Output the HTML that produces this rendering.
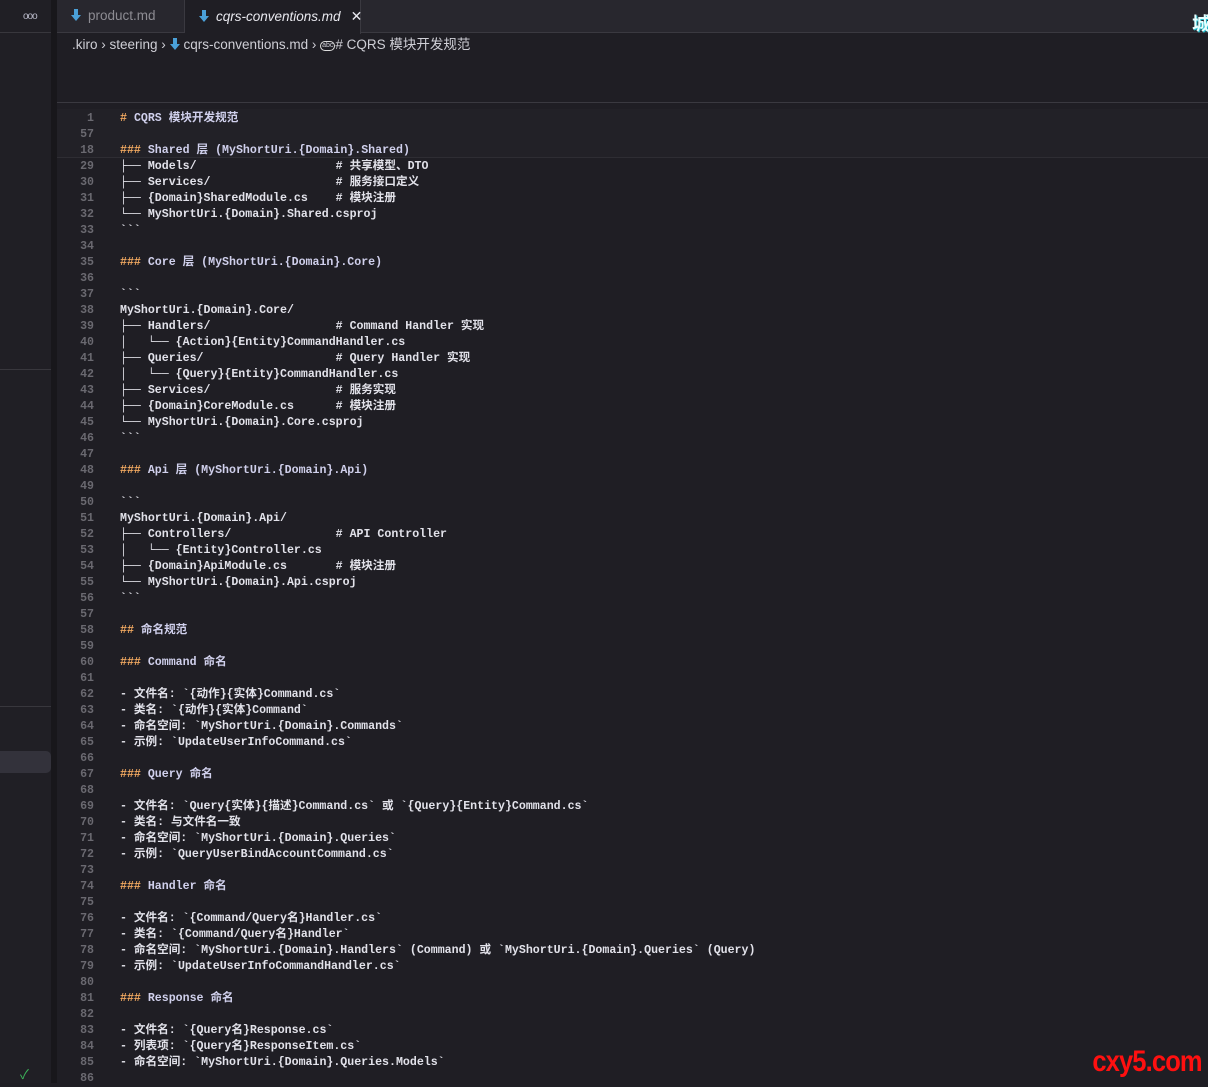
<!DOCTYPE html>
<html><head><meta charset="utf-8">
<style>
*{margin:0;padding:0;box-sizing:border-box}
body{width:1208px;height:1083px;background:#1f1e24;position:relative;overflow:hidden;font-family:"Liberation Sans","Noto Sans CJK SC",sans-serif;color:#d4d4d4}
.side{position:absolute;left:0;top:0;width:51px;height:1083px;background:#201f25}
.gap{position:absolute;left:51px;top:0;width:6px;height:1083px;background:#18171b}
.tabbar{position:absolute;left:57px;top:0;right:0;height:33px;background:#28272e;border-bottom:1px solid #3a3940}
.tab{position:absolute;top:0;height:33px;font-size:13.5px;line-height:32px;border-right:1px solid #3a3940;white-space:nowrap}
.t1{left:0;width:128px;color:#8d8c93;padding-left:14px}
.t2{left:128px;width:176px;background:#1f1e24;color:#e8e8ee;font-style:italic;padding-left:14px;height:34px}
.arrow{display:inline-block;width:10px;height:12px;margin-right:7px;vertical-align:-1px}
.crumb{position:absolute;left:72px;top:33px;font-size:13.5px;color:#cfcfd6;white-space:pre}
.sep{position:absolute;left:57px;right:0;top:102px;height:1px;background:#3a3940}
.sticky{position:absolute;left:57px;right:0;top:109px;height:49px;background:#222127;border-bottom:1px solid #2e2d33}
.code{position:absolute;left:57px;top:111px;font-family:"Liberation Mono","Noto Sans CJK SC",monospace;font-size:11.6px;font-weight:bold}
.l{height:16px;line-height:16px;white-space:pre;position:relative}
.n{position:absolute;left:0;width:37px;text-align:right;color:#6a6970}
.c{position:absolute;left:63px;color:#e2e2ea}
.h{color:#f0a860}
.hd{color:#d0d0ec}
.wm{position:absolute;right:6px;bottom:4px;color:#ff1010;font-family:"Liberation Sans",sans-serif;font-weight:bold;font-size:30px;letter-spacing:-1px;transform:scaleX(0.85);transform-origin:right}
</style></head><body>
<div class="side"></div>
<div style="position:absolute;left:0;top:32px;width:51px;height:1px;background:#38373d"></div>
<div style="position:absolute;left:0;top:369px;width:51px;height:1px;background:#38373d"></div>
<div style="position:absolute;left:0;top:706px;width:51px;height:1px;background:#38373d"></div>
<div style="position:absolute;left:0;top:751px;width:51px;height:22px;background:#33323b;border-radius:0 5px 5px 0"></div>
<div style="position:absolute;left:23px;top:11px;font-size:10px;color:#b8b8c8;letter-spacing:-1px">ooo</div>
<div style="position:absolute;left:20px;top:1064px;color:#3cb55a;font-size:13px">✓</div>
<div class="gap"></div>
<div class="tabbar">
 <div class="tab t1"><svg class="arrow" viewBox="0 0 10 12"><path d="M3 0h4v6h3L5 12 0 6h3z" fill="#4aa0d8"/></svg>product.md</div>
 <div class="tab t2"><svg class="arrow" viewBox="0 0 10 12"><path d="M3 0h4v6h3L5 12 0 6h3z" fill="#4aa0d8"/></svg>cqrs-conventions.md<span style="font-style:normal;margin-left:10px;font-size:14px">✕</span></div>
</div>
<div style="position:absolute;left:1192px;top:10px;color:#e8ffff;font-weight:bold;font-size:18px;font-family:'Noto Sans CJK SC',sans-serif;text-shadow:1px 1px 0 #20c0d0">城</div>
<div class="crumb">.kiro › steering › <svg class="arrow" viewBox="0 0 10 12" style="margin-right:4px"><path d="M3 0h4v6h3L5 12 0 6h3z" fill="#4aa0d8"/></svg>cqrs-conventions.md › <span style="display:inline-block;border:1.5px solid #ddd;border-radius:5px;font-size:7px;line-height:8px;padding:0 1px;vertical-align:2px">abc</span># CQRS 模块开发规范</div>
<div class="sep"></div>
<div class="sticky"></div>
<div class="code">
<div class="l"><span class="n">1</span><span class="c"><span class="h">#</span> <span class="hd">CQRS 模块开发规范</span></span></div>
<div class="l"><span class="n">57</span><span class="c"></span></div>
<div class="l"><span class="n">18</span><span class="c"><span class="h">###</span> <span class="hd">Shared 层 (MyShortUri.{Domain}.Shared)</span></span></div>
<div class="l"><span class="n">29</span><span class="c">├── Models/                    # 共享模型、DTO</span></div>
<div class="l"><span class="n">30</span><span class="c">├── Services/                  # 服务接口定义</span></div>
<div class="l"><span class="n">31</span><span class="c">├── {Domain}SharedModule.cs    # 模块注册</span></div>
<div class="l"><span class="n">32</span><span class="c">└── MyShortUri.{Domain}.Shared.csproj</span></div>
<div class="l"><span class="n">33</span><span class="c">&#96;&#96;&#96;</span></div>
<div class="l"><span class="n">34</span><span class="c"></span></div>
<div class="l"><span class="n">35</span><span class="c"><span class="h">###</span> <span class="hd">Core 层 (MyShortUri.{Domain}.Core)</span></span></div>
<div class="l"><span class="n">36</span><span class="c"></span></div>
<div class="l"><span class="n">37</span><span class="c">&#96;&#96;&#96;</span></div>
<div class="l"><span class="n">38</span><span class="c">MyShortUri.{Domain}.Core/</span></div>
<div class="l"><span class="n">39</span><span class="c">├── Handlers/                  # Command Handler 实现</span></div>
<div class="l"><span class="n">40</span><span class="c">│   └── {Action}{Entity}CommandHandler.cs</span></div>
<div class="l"><span class="n">41</span><span class="c">├── Queries/                   # Query Handler 实现</span></div>
<div class="l"><span class="n">42</span><span class="c">│   └── {Query}{Entity}CommandHandler.cs</span></div>
<div class="l"><span class="n">43</span><span class="c">├── Services/                  # 服务实现</span></div>
<div class="l"><span class="n">44</span><span class="c">├── {Domain}CoreModule.cs      # 模块注册</span></div>
<div class="l"><span class="n">45</span><span class="c">└── MyShortUri.{Domain}.Core.csproj</span></div>
<div class="l"><span class="n">46</span><span class="c">&#96;&#96;&#96;</span></div>
<div class="l"><span class="n">47</span><span class="c"></span></div>
<div class="l"><span class="n">48</span><span class="c"><span class="h">###</span> <span class="hd">Api 层 (MyShortUri.{Domain}.Api)</span></span></div>
<div class="l"><span class="n">49</span><span class="c"></span></div>
<div class="l"><span class="n">50</span><span class="c">&#96;&#96;&#96;</span></div>
<div class="l"><span class="n">51</span><span class="c">MyShortUri.{Domain}.Api/</span></div>
<div class="l"><span class="n">52</span><span class="c">├── Controllers/               # API Controller</span></div>
<div class="l"><span class="n">53</span><span class="c">│   └── {Entity}Controller.cs</span></div>
<div class="l"><span class="n">54</span><span class="c">├── {Domain}ApiModule.cs       # 模块注册</span></div>
<div class="l"><span class="n">55</span><span class="c">└── MyShortUri.{Domain}.Api.csproj</span></div>
<div class="l"><span class="n">56</span><span class="c">&#96;&#96;&#96;</span></div>
<div class="l"><span class="n">57</span><span class="c"></span></div>
<div class="l"><span class="n">58</span><span class="c"><span class="h">##</span> <span class="hd">命名规范</span></span></div>
<div class="l"><span class="n">59</span><span class="c"></span></div>
<div class="l"><span class="n">60</span><span class="c"><span class="h">###</span> <span class="hd">Command 命名</span></span></div>
<div class="l"><span class="n">61</span><span class="c"></span></div>
<div class="l"><span class="n">62</span><span class="c">- 文件名: &#96;{动作}{实体}Command.cs&#96;</span></div>
<div class="l"><span class="n">63</span><span class="c">- 类名: &#96;{动作}{实体}Command&#96;</span></div>
<div class="l"><span class="n">64</span><span class="c">- 命名空间: &#96;MyShortUri.{Domain}.Commands&#96;</span></div>
<div class="l"><span class="n">65</span><span class="c">- 示例: &#96;UpdateUserInfoCommand.cs&#96;</span></div>
<div class="l"><span class="n">66</span><span class="c"></span></div>
<div class="l"><span class="n">67</span><span class="c"><span class="h">###</span> <span class="hd">Query 命名</span></span></div>
<div class="l"><span class="n">68</span><span class="c"></span></div>
<div class="l"><span class="n">69</span><span class="c">- 文件名: &#96;Query{实体}{描述}Command.cs&#96; 或 &#96;{Query}{Entity}Command.cs&#96;</span></div>
<div class="l"><span class="n">70</span><span class="c">- 类名: 与文件名一致</span></div>
<div class="l"><span class="n">71</span><span class="c">- 命名空间: &#96;MyShortUri.{Domain}.Queries&#96;</span></div>
<div class="l"><span class="n">72</span><span class="c">- 示例: &#96;QueryUserBindAccountCommand.cs&#96;</span></div>
<div class="l"><span class="n">73</span><span class="c"></span></div>
<div class="l"><span class="n">74</span><span class="c"><span class="h">###</span> <span class="hd">Handler 命名</span></span></div>
<div class="l"><span class="n">75</span><span class="c"></span></div>
<div class="l"><span class="n">76</span><span class="c">- 文件名: &#96;{Command/Query名}Handler.cs&#96;</span></div>
<div class="l"><span class="n">77</span><span class="c">- 类名: &#96;{Command/Query名}Handler&#96;</span></div>
<div class="l"><span class="n">78</span><span class="c">- 命名空间: &#96;MyShortUri.{Domain}.Handlers&#96; (Command) 或 &#96;MyShortUri.{Domain}.Queries&#96; (Query)</span></div>
<div class="l"><span class="n">79</span><span class="c">- 示例: &#96;UpdateUserInfoCommandHandler.cs&#96;</span></div>
<div class="l"><span class="n">80</span><span class="c"></span></div>
<div class="l"><span class="n">81</span><span class="c"><span class="h">###</span> <span class="hd">Response 命名</span></span></div>
<div class="l"><span class="n">82</span><span class="c"></span></div>
<div class="l"><span class="n">83</span><span class="c">- 文件名: &#96;{Query名}Response.cs&#96;</span></div>
<div class="l"><span class="n">84</span><span class="c">- 列表项: &#96;{Query名}ResponseItem.cs&#96;</span></div>
<div class="l"><span class="n">85</span><span class="c">- 命名空间: &#96;MyShortUri.{Domain}.Queries.Models&#96;</span></div>
<div class="l"><span class="n">86</span><span class="c"></span></div>
</div>
<div class="wm">cxy5.com</div>
</body></html>
